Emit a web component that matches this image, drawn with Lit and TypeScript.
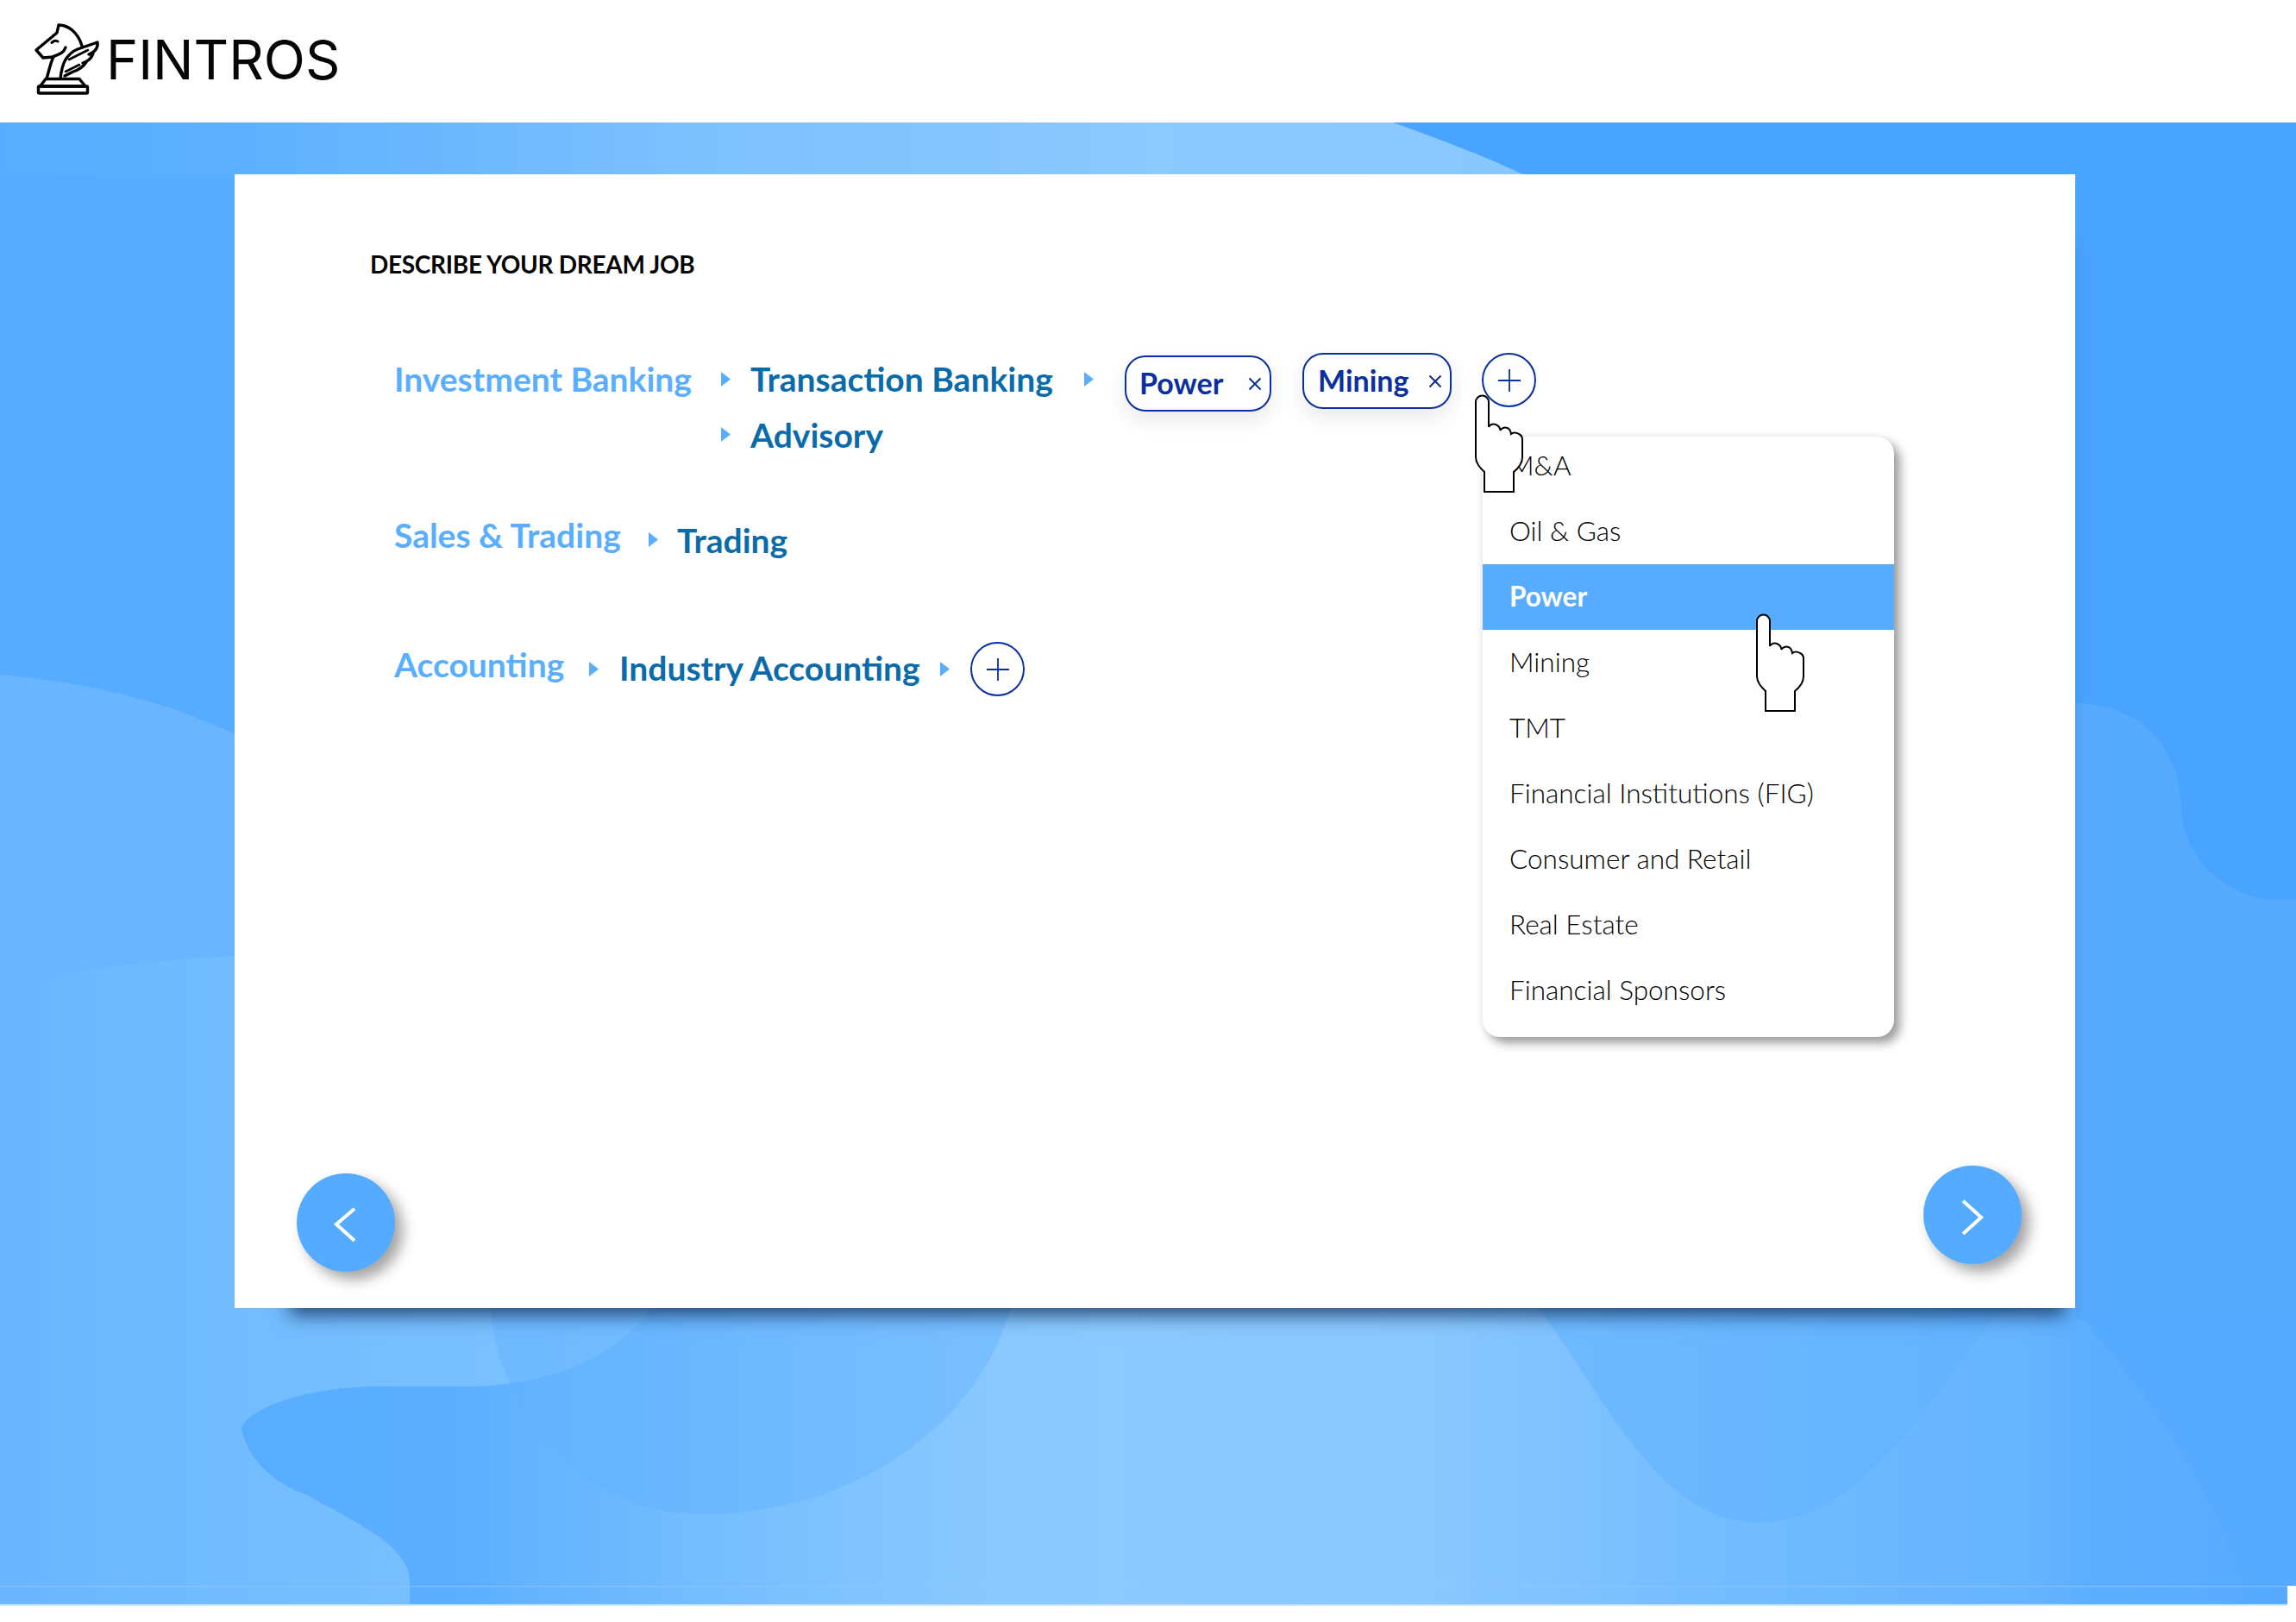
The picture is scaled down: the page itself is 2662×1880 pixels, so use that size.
import { LitElement, html, css, svg } from "lit";
import { customElement } from "lit/decorators.js";

const hand = html`<svg viewBox="-1 -1 57 115" width="57" height="115" fill="#fff" stroke="#000" stroke-width="2"><path d="M0 72V8a7.500 7.500 0 0 1 15 0V37c1-3 5-4 8-3 3 1 5 3 5.500 7 1-3 5-4 8-3 3 1 4 4 4.500 7 2-2 6-2 9 0 2 1 4 3 4 6V72c0 7-5 13-10 17v23H10V89C5 84 0 79 0 72Z"/></svg>`;

const plus = html`<svg viewBox="0 0 28 28" width="28" height="28" fill="none" stroke="#0a2fa0" stroke-width="1.800"><path d="M14 1v26M1 14h26"/></svg>`;
const cross = html`<svg viewBox="0 0 16 16" width="16" height="16" fill="none" stroke="#0a2fa0" stroke-width="2"><path d="M1.500 1.500l13 13M14.500 1.500l-13 13"/></svg>`;

@customElement("app-root")
export class AppRoot extends LitElement {
  static styles = css`
    :host { display: block; width: 2662px; height: 1880px; background: #fff; font-family: "Lato", "Open Sans", sans-serif; overflow: hidden; }
    .head { height: 142px; display: flex; align-items: center; padding-left: 38px; padding-bottom: 4px; box-sizing: border-box; }
    .brand { font-family: "Inter", sans-serif; font-size: 63px; font-weight: 400; color: #050505; margin-left: 5px; line-height: 1; }
    .main { position: relative; height: 1719px; padding: 60px 0 0 272px; box-sizing: border-box; }
    .bg { position: absolute; left: 0; top: 0; display: block; }
    .card { position: relative; width: 2134px; height: 1314px; background: #fff; box-sizing: border-box; padding: 86px 62px 0 157px; display: flex; flex-direction: column; box-shadow: 26px 46px 20px -38px rgba(15, 45, 85, .8); }
    .title { font-size: 28px; line-height: 36px; font-weight: 700; letter-spacing: -0.3px; color: #050505; margin-bottom: 84px; }
    .rows { margin-left: 28px; display: flex; flex-direction: column; }
    .row { display: flex; align-items: flex-start; }
    .line { height: 64px; box-sizing: border-box; display: flex; align-items: center; font-size: 39px; font-weight: 700; white-space: nowrap; }
    .up { padding-bottom: 3px; }
    .light { color: #5aaeff; }
    .dark { color: #0a6bab; }
    .tri { width: 11px; height: 17px; margin-top: 23px; background: #5aaeff; clip-path: polygon(0 0, 100% 50%, 0 100%); flex: none; }
    .branch { display: flex; flex-direction: column; }
    .sub { display: flex; align-items: flex-start; }
    .w-root1 { width: 379px; }
    .w-root2 { width: 295px; }
    .w-root3 { width: 226px; }
    .gap-a { margin-right: 23px; }
    .gap-b { margin-right: 22px; }
    .gap-c { margin-right: 24px; }
    .w-tb { width: 387px; }
    .w-ia { width: 372px; }
    .gap-tb { margin-right: 36px; }
    .chips { display: flex; align-items: flex-start; height: 64px; }
    .chip { height: 65px; box-sizing: border-box; border: 2px solid #0a2fa0; border-radius: 24px; background: #fff; box-shadow: 0 10px 26px rgba(0, 0, 0, .09); display: flex; align-items: center; justify-content: space-between; color: #0a2fa0; font-size: 34px; font-weight: 700; flex: none; }
    .chip svg { flex: none; }
    .chip span { margin-bottom: 2px; }
    .c-power { width: 170px; margin-top: 4px; padding: 0 9px 0 15px; }
    .c-mining { width: 173px; margin-top: 1px; margin-left: 36px; padding: 0 9px 0 16px; }
    .add { width: 63px; height: 63px; box-sizing: border-box; border: 2px solid #0a2fa0; border-radius: 50%; display: flex; align-items: center; justify-content: center; background: #fff; flex: none; }
    .add-top { margin-top: 1px; margin-left: 35px; }
    .add-low { margin-top: 2px; }
    .tri-low { margin-top: 25px; }
    .r2 { margin-top: 52px; }
    .r3 { margin-top: 80px; }
    .low6 { margin-top: 6px; }
    .low5 { margin-top: 4px; }
    .menu { position: absolute; left: 1447px; top: 304px; width: 477px; height: 696px; background: #fff; border-radius: 20px; box-shadow: 7px 7px 12px rgba(0, 0, 0, .38), -2px 0 10px rgba(0, 0, 0, .06); box-sizing: border-box; overflow: hidden; }
    .item { height: 76px; display: flex; align-items: center; padding-left: 31px; padding-bottom: 2px; font-size: 31.500px; font-weight: 300; color: #000; white-space: nowrap; box-sizing: border-box; }
    .item:first-child { height: 72px; padding-bottom: 6px; }
    .item.on { background: #57acff; color: #fff; font-weight: 700; }
    .hand { position: absolute; line-height: 0; }
    .h1 { left: 1438px; top: 255px; }
    .h2 { left: 1764px; top: 509px; }
    .foot { margin-top: auto; margin-left: -85px; margin-bottom: 51px; display: flex; justify-content: space-between; align-items: flex-start; }
    .nav { width: 114px; height: 114px; border-radius: 50%; background: #55abff; box-shadow: 9px 9px 16px rgba(0, 0, 0, .36); display: flex; align-items: center; justify-content: center; }
    .nav svg { margin-top: 5px; }
    .back { margin-top: 9px; margin-bottom: -9px; }
    .back svg { margin-right: 3px; }
  `;

  render() {
    const items = ["M&A", "Oil & Gas", "Power", "Mining", "TMT", "Financial Institutions (FIG)", "Consumer and Retail", "Real Estate", "Financial Sponsors"];
    return html`
      <div class="head">
        <svg viewBox="38 22 80 88" width="80" height="88" fill="none" stroke="#000" stroke-width="3.400" stroke-linejoin="round" stroke-linecap="round">
          <path d="M54 88C57 79 58 71 62 63L50 64 42 55 66 35 68 26C79 26 90 34 95 50"/>
          <path d="M61 63C67 60 73 60 76 52"/>
          <path d="M60 46.500C62 44 65 44 67 45" stroke-width="3"/>
          <path d="M70 88C71 79 72 73 76 66 80 60 85 56 90 54L113 46C114 51 111 56 107 58L103 60C105 60 107 60 108 59 106 65 102 68 96 70 98 70 99 70 100 69 96 75 91 78 85 80L75 85"/>
          <path d="M80 66L102 55M76 80L92 72" stroke-width="2.600"/>
          <path d="M53 88.500H92L99 97H46.500Z"/>
          <rect x="44.500" y="97" width="57" height="8" rx="1"/>
        </svg>
        <div class="brand">FINTROS</div>
      </div>
      <div class="main">
        <svg class="bg" width="2662" height="1719" viewBox="0 142 2662 1719">
          <defs>
            <linearGradient id="base" x1="0" x2="1" y1="0" y2="0">
              <stop offset="0" stop-color="#6ab5ff"/><stop offset=".08" stop-color="#70bbff"/>
              <stop offset=".3" stop-color="#7fc3ff"/><stop offset=".48" stop-color="#8bcaff"/>
              <stop offset=".62" stop-color="#8ac8ff"/><stop offset=".75" stop-color="#73bcff"/>
              <stop offset=".88" stop-color="#66b4ff"/><stop offset=".91" stop-color="#5cafff"/>
              <stop offset="1" stop-color="#57abff"/>
            </linearGradient>
            <linearGradient id="blobA" x1="280" x2="1150" y1="0" y2="0" gradientUnits="userSpaceOnUse">
              <stop offset="0" stop-color="#57adff"/><stop offset=".3" stop-color="#5cafff"/><stop offset="1" stop-color="#7cc2ff" stop-opacity="0"/>
            </linearGradient>
            <linearGradient id="top" x1="0" x2="1" y1="0" y2="0">
              <stop offset="0" stop-color="#57adff"/><stop offset=".1" stop-color="#5cb0ff"/><stop offset=".3" stop-color="#7cc0ff"/><stop offset=".5" stop-color="#8bc9ff"/><stop offset=".62" stop-color="#8ac8ff"/><stop offset="1" stop-color="#76bcff"/>
            </linearGradient>
            <linearGradient id="cfade" x1="1780" x2="2400" y1="0" y2="0" gradientUnits="userSpaceOnUse">
              <stop offset="0" stop-color="#6fbaff"/><stop offset="1" stop-color="#5fb1ff"/>
            </linearGradient>
          </defs>
          <rect x="0" y="142" width="2662" height="1719" fill="url(#base)"/>
          <rect x="0" y="142" width="2662" height="62" fill="url(#top)"/>
          ${svg`
            <path d="M0 204H272V851C190 812 90 790 0 782Z" fill="#56acff"/>
            <path d="M0 782C100 790 190 812 272 851V1108C180 1112 90 1125 0 1139Z" fill="#69b5ff"/>
            <path d="M1615 142C1680 165 1730 185 1770 204H2406V815C2480 818 2530 860 2530 950 2540 1010 2600 1052 2662 1042V142Z" fill="#49a4ff"/>
            <path d="M2406 815C2480 818 2530 860 2530 950 2540 1010 2600 1052 2662 1042V1530H2406Z" fill="#57abff"/>
            <path d="M755 1516C720 1570 640 1607 540 1607H440C340 1607 280 1640 280 1657 290 1700 330 1725 357 1733 400 1760 480 1790 475 1838V1861H1100C1150 1750 1170 1600 1171 1516Z" fill="url(#blobA)"/>
            <path d="M569 1516C575 1620 660 1755 815 1755 1000 1755 1140 1640 1171 1516Z" fill="#5fb0ff" fill-opacity=".38"/>
            <path d="M1783 1516C1850 1600 1920 1765 2037 1765 2160 1765 2240 1620 2309 1530 2325 1518 2360 1516 2377 1516Z" fill="url(#cfade)"/>
            <path d="M2406 1516C2470 1600 2560 1700 2597 1838V1861H2662V1516Z" fill="#56aaff"/>
            <rect x="0" y="1838" width="2652" height="1.500" fill="#8ccaff" fill-opacity=".6"/>
            <rect x="0" y="1859" width="2652" height="2" fill="#b6dcff"/>
            <rect x="2652" y="1838" width="10" height="23" fill="#fff"/>
          `}
        </svg>
        <div class="card">
          <div class="title">DESCRIBE YOUR DREAM JOB</div>
          <div class="rows">
            <div class="row">
              <div class="line light w-root1 up">Investment Banking</div>
              <div class="branch">
                <div class="sub">
                  <div class="tri gap-a"></div>
                  <div class="line dark w-tb up">Transaction Banking</div>
                  <div class="tri gap-tb"></div>
                  <div class="chips">
                    <div class="chip c-power"><span>Power</span>${cross}</div>
                    <div class="chip c-mining"><span>Mining</span>${cross}</div>
                    <div class="add add-top">${plus}</div>
                  </div>
                </div>
                <div class="sub">
                  <div class="tri gap-a"></div>
                  <div class="line dark">Advisory</div>
                </div>
              </div>
            </div>
            <div class="row r2">
              <div class="line light w-root2">Sales &amp; Trading</div>
              <div class="sub low6">
                <div class="tri gap-b"></div>
                <div class="line dark">Trading</div>
              </div>
            </div>
            <div class="row r3">
              <div class="line light w-root3">Accounting</div>
              <div class="sub low5">
                <div class="tri tri-low gap-c"></div>
                <div class="line dark w-ia">Industry Accounting</div>
                <div class="tri tri-low gap-c"></div>
                <div class="add add-low">${plus}</div>
              </div>
            </div>
          </div>
          <div class="foot">
            <div class="nav back"><svg viewBox="0 0 30 44" width="30" height="44" fill="none" stroke="#fff" stroke-width="4"><path d="M26 3L5 21l21 19"/></svg></div>
            <div class="nav"><svg viewBox="0 0 30 44" width="30" height="44" fill="none" stroke="#fff" stroke-width="4"><path d="M4 3l21 19L4 41"/></svg></div>
          </div>
          <div class="menu">
            ${items.map((t) => html`<div class="item ${t === "Power" ? "on" : ""}">${t}</div>`)}
          </div>
          <div class="hand h1">${hand}</div>
          <div class="hand h2">${hand}</div>
        </div>
      </div>
    `;
  }
}
